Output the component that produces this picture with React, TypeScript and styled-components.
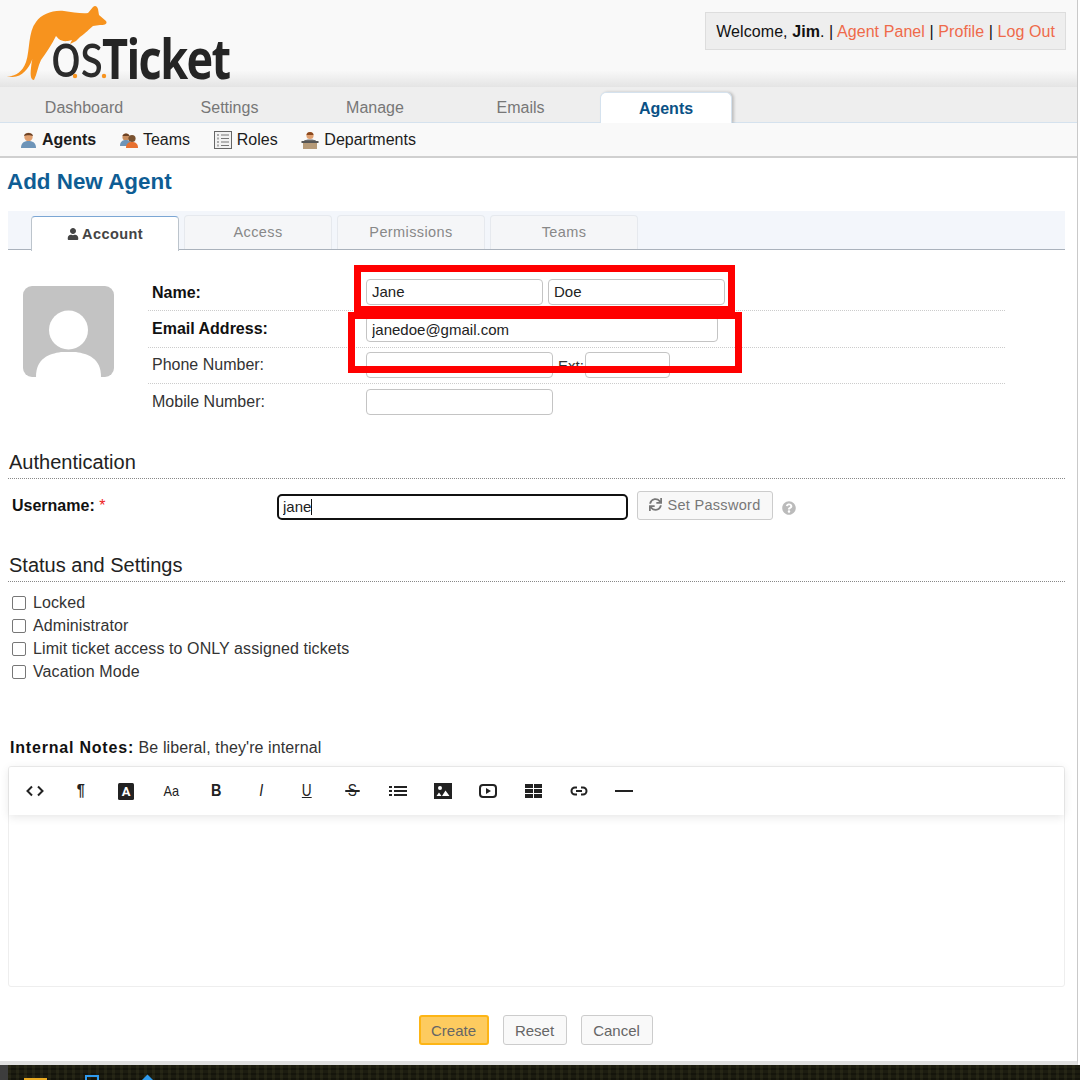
import React from "react";
import styled, { createGlobalStyle } from "styled-components";
import { FaUser, FaSync, FaQuestionCircle } from "react-icons/fa";

const Global = createGlobalStyle`
  html, body { margin: 0; padding: 0; background: #fff; }
  * { box-sizing: border-box; }
  body { font-family: "Liberation Sans", Arial, sans-serif; font-size: 16px; color: #111; }
`;

const Page = styled.div`
  position: relative;
  width: 1080px;
  height: 1080px;
  overflow: hidden;
  display: flex;
  flex-direction: column;
  background: #fff;
`;
const Window = styled.div`
  width: 1078px;
  height: 1065px;
  flex: none;
  border-right: 1px solid #c9c9c9;
  border-bottom: 4px solid #e0e0e0;
  display: flex;
  flex-direction: column;
`;
const Header = styled.header`
  height: 87px;
  flex: none;
  background: linear-gradient(#f9f9f9 0, #f9f9f9 70px, #e4e4e4 87px);
  display: flex;
  justify-content: space-between;
  padding: 0 11px 0 7px;
`;
const Logo = styled.div`
  position: relative;
  width: 230px;
  height: 87px;
`;
const LogoOs = styled.span`
  position: absolute;
  left: 44px;
  top: 16px;
  font: 400 66px/72px Lato, sans-serif;
  letter-spacing: -1px;
  color: #2b2b2b;
  transform: scaleX(0.8);
  transform-origin: left center;
`;
const LogoTicket = styled.span`
  position: absolute;
  left: 95px;
  top: 26px;
  font: 700 55px/64px "Open Sans", sans-serif;
  letter-spacing: -2px;
  color: #252525;
  transform: scaleX(0.82);
  transform-origin: left center;
`;
const Welcome = styled.div`
  margin-top: 12px;
  height: 38px;
  padding: 1px 10px 0;
  background: #eee;
  border: 1px solid #ddd;
  display: flex;
  align-items: center;
  letter-spacing: 0.08px;
  white-space: pre;
`;
const Link = styled.a`
  color: #ef6a4a;
`;
const Nav = styled.nav`
  height: 36px;
  flex: none;
  background: #eee;
  border-bottom: 1px solid #d5e2ee;
  padding-left: 18px;
  display: flex;
  gap: 13.5px;
`;
const NavTab = styled.div<{ $active?: boolean }>`
  width: 132px;
  height: ${(p) => (p.$active ? "31px" : "auto")};
  margin-top: ${(p) => (p.$active ? "5px" : "0")};
  display: flex;
  align-items: center;
  justify-content: center;
  padding-top: ${(p) => (p.$active ? "2px" : "6px")};
  color: ${(p) => (p.$active ? "#0a5185" : "#777")};
  font-weight: ${(p) => (p.$active ? 700 : 400)};
  background: ${(p) => (p.$active ? "#fff" : "transparent")};
  border-radius: ${(p) => (p.$active ? "6px 6px 0 0" : "0")};
  border: ${(p) => (p.$active ? "1px solid #d5e2ee" : "none")};
  border-bottom: none;
  box-shadow: ${(p) => (p.$active ? "2px 0 3px rgba(0,0,0,.2)" : "none")};
`;
const SubNav = styled.div`
  height: 35px;
  flex: none;
  background: #f9f9f9;
  border-bottom: 2px solid #d0d0d0;
  padding-left: 20px;
  display: flex;
  align-items: center;
  gap: 23.7px;
`;
const SubItem = styled.div<{ $active?: boolean }>`
  display: flex;
  align-items: center;
  gap: 5px;
  font-weight: ${(p) => (p.$active ? 700 : 400)};
  color: #1c1c1c;
`;
const Main = styled.main`
  flex: 1;
  padding: 0 12px 0 8px;
  display: flex;
  flex-direction: column;
`;
const Title = styled.h2`
  margin: 10px 0 15px -1px;
  height: 28px;
  font: 700 22.4px/28px "Liberation Sans", sans-serif;
  color: #0e5d94;
`;
const TabBar = styled.div`
  height: 39px;
  background: #f3f6fb;
  border-bottom: 1px solid #aab2bc;
  padding: 4px 0 0 23px;
  display: flex;
  gap: 5px;
`;
const Tab = styled.div<{ $active?: boolean }>`
  width: 148px;
  height: ${(p) => (p.$active ? "35px" : "34px")};
  margin-top: ${(p) => (p.$active ? "1px" : "0")};
  background: ${(p) => (p.$active ? "#fff" : "#f5f6f8")};
  border: 1px solid ${(p) => (p.$active ? "#bcc4cc" : "#e6e9ee")};
  border-top-color: ${(p) => (p.$active ? "#7ba6d4" : "#e6e9ee")};
  border-bottom: none;
  border-radius: 4px 4px 0 0;
  display: flex;
  align-items: center;
  justify-content: center;
  gap: 3px;
  font-size: 14.5px;
  letter-spacing: 0.4px;
  font-weight: ${(p) => (p.$active ? 700 : 400)};
  color: ${(p) => (p.$active ? "#444" : "#888")};
  padding-bottom: ${(p) => (p.$active ? "0" : "1px")};
`;
const Profile = styled.section`
  display: flex;
  padding: 25px 60px 0 15px;
  height: 202px;
`;
const Avatar = styled.div`
  width: 91px;
  height: 91px;
  margin-top: 11px;
  flex: none;
`;
const Rows = styled.div`
  flex: 1;
  margin-left: 34px;
`;
const Row = styled.div<{ $last?: boolean }>`
  height: 36.4px;
  display: flex;
  align-items: center;
  border-bottom: ${(p) => (p.$last ? "none" : "1px dotted #ccc")};
`;
const RowLabel = styled.div<{ $bold?: boolean }>`
  width: 218px;
  padding-left: 4px;
  font-weight: ${(p) => (p.$bold ? 700 : 400)};
  color: ${(p) => (p.$bold ? "#111" : "#333")};
`;
const TextBox = styled.input<{ $w: number; $up?: boolean }>`
  width: ${(p) => p.$w}px;
  height: 26px;
  margin-top: ${(p) => (p.$up ? "-2px" : "0")};
  padding: 0 5px;
  border: 1px solid #c4c4c4;
  border-radius: 4px;
  background: #fff;
  font: 15px "Liberation Sans", sans-serif;
  color: #222;
  outline: none;
`;
const Ext = styled.span`
  margin: 0 1px 0 5px;
  color: #333;
  font-size: 15px;
`;
const Gap = styled.span`
  display: inline-block;
  width: 5px;
`;
const Section = styled.div`
  height: 27px;
  padding-left: 1px;
  border-bottom: 1px dotted #888;
  font-size: 20px;
  line-height: 21px;
  color: #222;
`;
const UserRow = styled.div`
  display: flex;
  align-items: center;
  height: 42px;
  margin: 6px 0 28px;
  padding-left: 4px;
`;
const UserLabel = styled.div`
  width: 265px;
  font-weight: 700;
`;
const Star = styled.span`
  color: #e22;
  font-weight: 400;
`;
const FocusBox = styled.input`
  width: 351px;
  height: 26px;
  padding: 0 4px;
  margin-top: 1px;
  border: 2px solid #111;
  border-radius: 5px;
  font: 15px "Liberation Sans", sans-serif;
  color: #222;
  outline: none;
`;
const Caret = styled.span`
  position: absolute;
  left: 311px;
  top: 499px;
  width: 1px;
  height: 16px;
  background: #111;
`;
const SetPw = styled.div`
  width: 136px;
  height: 29px;
  margin: -1px 0 0 9px;
  padding-bottom: 2px;
  border: 1px solid #ccc;
  border-radius: 3px;
  background: #f8f8f8;
  display: flex;
  align-items: center;
  justify-content: center;
  gap: 5px;
  color: #777;
  font-size: 14.5px;
  letter-spacing: 0.3px;
`;
const Help = styled.span`
  display: flex;
  margin: 3px 0 0 9px;
  color: #bbb;
  font-size: 14px;
`;
const Checks = styled.div`
  display: flex;
  flex-direction: column;
  padding: 10px 0 0 4px;
  height: 156px;
`;
const CheckRow = styled.label`
  height: 22.8px;
  display: flex;
  align-items: center;
  gap: 7px;
  letter-spacing: 0.09px;
  color: #333;
`;
const Box = styled.span`
  width: 14px;
  height: 14px;
  flex: none;
  border: 1px solid #777;
  border-radius: 2px;
  background: #fff;
`;
const Notes = styled.div`
  height: 28px;
  padding-left: 2px;
  line-height: 20px;
  color: #333;
  letter-spacing: 0.1px;
  b {
    color: #111;
    letter-spacing: 0.8px;
  }
`;
const Editor = styled.div`
  height: 221px;
  border: 1px solid #eee;
  border-radius: 3px;
`;
const Toolbar = styled.div`
  height: 48px;
  padding-left: 3.5px;
  display: flex;
  align-items: center;
  box-shadow: 0 2px 9px rgba(0, 0, 0, 0.1);
  color: #222;
`;
const Tool = styled.span`
  width: 45.3px;
  flex: none;
  display: flex;
  align-items: center;
  justify-content: center;
`;
const Glyph = styled.span<{ $size?: number; $bold?: boolean; $italic?: boolean; $under?: boolean }>`
  font: ${(p) => (p.$italic ? "italic " : "")}${(p) => (p.$bold ? 700 : 400)} ${(p) => p.$size ?? 15}px/18px "Liberation Sans", sans-serif;
  text-decoration: ${(p) => (p.$under ? "underline" : "none")};
  display: inline-block;
  transform: scaleX(0.85);
`;
const StrikeGlyph = styled(Glyph)`
  position: relative;
  &::after {
    content: "";
    position: absolute;
    left: -3px;
    right: -3px;
    top: 8px;
    height: 1.5px;
    background: #222;
  }
`;
const Actions = styled.div`
  display: flex;
  justify-content: center;
  gap: 14px;
  margin-top: 28px;
  padding-right: 2px;
`;
const Btn = styled.div<{ $primary?: boolean; $w: number }>`
  width: ${(p) => p.$w}px;
  height: 30px;
  border: ${(p) => (p.$primary ? "2px solid #fdb515" : "1px solid #ccc")};
  border-radius: 3px;
  background: ${(p) => (p.$primary ? "#fdcb5f" : "#f9f9f9")};
  display: flex;
  align-items: center;
  justify-content: center;
  font-size: 15px;
  color: #666;
`;
const Taskbar = styled.div`
  flex: 1;
  border-left: 8px solid #3d3d3d;
  background-color: #1c1c10;
  background-image: repeating-linear-gradient(90deg, rgba(90, 90, 50, 0.16) 0 3px, transparent 3px 8px),
    repeating-linear-gradient(0deg, rgba(0, 0, 0, 0.3) 0 2px, transparent 2px 5px);
  display: flex;
  align-items: flex-start;
  padding-left: 16px;
  overflow: hidden;
`;
const TrayFolder = styled.span`
  width: 23px;
  height: 4px;
  margin-top: 13px;
  background: #e8a920;
`;
const TrayStore = styled.span`
  width: 14px;
  height: 8px;
  margin: 10px 0 0 38px;
  border: 2px solid #2f9bef;
  border-bottom: none;
`;
const TrayEdge = styled.span`
  width: 17px;
  height: 17px;
  margin: 10px 0 0 40px;
  background: #2f9bef;
  transform: rotate(45deg) scale(0.75);
`;
const RedBox = styled.div<{ $l: number; $t: number; $w: number; $h: number }>`
  position: absolute;
  left: ${(p) => p.$l}px;
  top: ${(p) => p.$t}px;
  width: ${(p) => p.$w}px;
  height: ${(p) => p.$h}px;
  border: 7px solid #ff0000;
`;

const Roo = () => (
  <svg width="112" height="84" viewBox="0 0 112 84" style={{ position: "absolute", left: -7, top: 0 }}>
    <path
      fill="#f7931e"
      d="M7 76 C14 77 22 73 26 62 C30 50 28 32 36 22 C42 14 52 10 64 11 C72 12 82 14 88 13 L93 7 C95 5 97 6 98 9 L99 15 L106 21 C108 24 104 25.500 100 25 L93 26 C89 29 86 33 80 37 L76 41 L70 44 L72 40 L68 41 C60 42 58 38 56 36 C52 44 46 53 41 60 C38 66 37 74 34 80 C31 80 30 76 31 68 C32 55 38 40 45 29 C39 38 36 50 32 60 C28 70 20 80 7 76 Z"
    />
    <circle cx="75" cy="76" r="2.200" fill="#f7931e" />
    <circle cx="104" cy="76" r="2.200" fill="#f7931e" />
  </svg>
);

const Person = ({ shirt = "#6d94b8" }: { shirt?: string }) => (
  <svg width="17" height="18" viewBox="0 0 17 18">
    <circle cx="8.500" cy="6" r="4.200" fill="#e0a070" />
    <path d="M4 5 C4 1 13 1 13 5 C11 4 6 4 4 5Z" fill="#6b4226" />
    <path d="M1 17 C1 11 5 10 8.500 10 C12 10 16 11 16 17 Z" fill={shirt} />
  </svg>
);
const Team = () => (
  <svg width="18" height="18" viewBox="0 0 18 18">
    <circle cx="6" cy="6" r="3.600" fill="#c98d5e" />
    <path d="M2.500 5 C3 1.500 9 1.500 9.500 5Z" fill="#6b4226" />
    <path d="M0 15 C0 10 3 9 6 9 C9 9 11 10 11 15Z" fill="#6d94b8" />
    <circle cx="12" cy="7.500" r="3.600" fill="#7a5230" />
    <path d="M6 17 C6 12 9 11 12 11 C15 11 18 12 18 17Z" fill="#e8702f" />
  </svg>
);
const RoleIcon = () => (
  <svg width="18" height="18" viewBox="0 0 18 18">
    <rect x="0.500" y="0.500" width="17" height="17" fill="#f2f2f2" stroke="#666" />
    {[4, 7.5, 11, 14.5].map((y) => (
      <g key={y}>
        <rect x="3" y={y - 1} width="2" height="2" fill="#aaa" />
        <rect x="7" y={y - 0.5} width="8" height="1" fill="#777" />
      </g>
    ))}
  </svg>
);
const DeptIcon = () => (
  <svg width="18" height="18" viewBox="0 0 18 18">
    <circle cx="9" cy="4.500" r="3.600" fill="#e0a070" />
    <path d="M5.500 4 C5.500 0 12.500 0 12.500 4Z" fill="#8a4a20" />
    <path d="M3 10 C3 8 15 8 15 10Z" fill="#6a6a6a" />
    <rect x="0.500" y="10" width="17" height="2" fill="#555" />
    <rect x="2" y="12" width="14" height="6" fill="#b59a78" />
  </svg>
);

const Silhouette = () => (
  <svg width="91" height="91" viewBox="0 0 91 91">
    <rect width="91" height="91" rx="9" fill="#c3c3c3" />
    <circle cx="45.500" cy="44" r="19.500" fill="#fff" />
    <path d="M13 91 C13 72 26 68 38 66 L53 66 C65 68 78 72 78 91 Z" fill="#fff" />
  </svg>
);

const Svg = ({ w = 18, h = 16, children }: { w?: number; h?: number; children: React.ReactNode }) => (
  <svg width={w} height={h} viewBox={`0 0 ${w} ${h}`}>
    {children}
  </svg>
);

export default function App() {
  return (
    <Page>
      <Global />
      <Window>
        <Header>
          <Logo>
            <LogoOs>os</LogoOs>
            <LogoTicket>Ticket</LogoTicket>
            <Roo />
          </Logo>
          <Welcome>
            <span>
              Welcome, <b>Jim</b>. | <Link>Agent Panel</Link> | <Link>Profile</Link> | <Link>Log Out</Link>
            </span>
          </Welcome>
        </Header>
        <Nav>
          <NavTab>Dashboard</NavTab>
          <NavTab>Settings</NavTab>
          <NavTab>Manage</NavTab>
          <NavTab>Emails</NavTab>
          <NavTab $active>Agents</NavTab>
        </Nav>
        <SubNav>
          <SubItem $active>
            <Person />
            Agents
          </SubItem>
          <SubItem>
            <Team />
            Teams
          </SubItem>
          <SubItem>
            <RoleIcon />
            Roles
          </SubItem>
          <SubItem>
            <DeptIcon />
            Departments
          </SubItem>
        </SubNav>
        <Main>
          <Title>Add New Agent</Title>
          <TabBar>
            <Tab $active>
              <FaUser size={12} />
              Account
            </Tab>
            <Tab>Access</Tab>
            <Tab>Permissions</Tab>
            <Tab>Teams</Tab>
          </TabBar>
          <Profile>
            <Avatar>
              <Silhouette />
            </Avatar>
            <Rows>
              <Row>
                <RowLabel $bold>Name:</RowLabel>
                <TextBox $w={177} $up defaultValue="Jane" />
                <Gap />
                <TextBox $w={177} $up defaultValue="Doe" />
              </Row>
              <Row>
                <RowLabel $bold>Email Address:</RowLabel>
                <TextBox $w={352} defaultValue="janedoe@gmail.com" />
              </Row>
              <Row>
                <RowLabel>Phone Number:</RowLabel>
                <TextBox $w={187} />
                <Ext>Ext:</Ext>
                <TextBox $w={85} />
              </Row>
              <Row $last>
                <RowLabel>Mobile Number:</RowLabel>
                <TextBox $w={187} />
              </Row>
            </Rows>
          </Profile>
          <Section>Authentication</Section>
          <UserRow>
            <UserLabel>
              Username: <Star>*</Star>
            </UserLabel>
            <FocusBox defaultValue="jane" />
            <SetPw>
              <FaSync size={13} />
              Set Password
            </SetPw>
            <Help>
              <FaQuestionCircle />
            </Help>
          </UserRow>
          <Section>Status and Settings</Section>
          <Checks>
            <CheckRow>
              <Box />
              Locked
            </CheckRow>
            <CheckRow>
              <Box />
              Administrator
            </CheckRow>
            <CheckRow>
              <Box />
              Limit ticket access to ONLY assigned tickets
            </CheckRow>
            <CheckRow>
              <Box />
              Vacation Mode
            </CheckRow>
          </Checks>
          <Notes>
            <b>Internal Notes:</b> Be liberal, they're internal
          </Notes>
          <Editor>
            <Toolbar>
              <Tool>
                <Svg w={18} h={12}>
                  <path d="M6 1.500 L1.500 6 L6 10.500 M12 1.500 L16.500 6 L12 10.500" fill="none" stroke="#222" strokeWidth="2" />
                </Svg>
              </Tool>
              <Tool>
                <Glyph $size={17} $bold>¶</Glyph>
              </Tool>
              <Tool>
                <Svg w={16} h={17}>
                  <rect width="16" height="17" rx="1.500" fill="#222" />
                  <text x="8" y="13" textAnchor="middle" fontFamily="Roboto" fontSize="13" fontWeight="700" fill="#fff">A</text>
                </Svg>
              </Tool>
              <Tool>
                <Glyph $size={15}>Aa</Glyph>
              </Tool>
              <Tool>
                <Glyph $size={17} $bold>B</Glyph>
              </Tool>
              <Tool>
                <Glyph $size={17} $italic>I</Glyph>
              </Tool>
              <Tool>
                <Glyph $size={16} $under>U</Glyph>
              </Tool>
              <Tool>
                <StrikeGlyph $size={16}>S</StrikeGlyph>
              </Tool>
              <Tool>
                <Svg w={18} h={12}>
                  <path d="M0 1h3v2H0zM5 1h13v2H5zM0 5h3v2H0zM5 5h13v2H5zM0 9h3v2H0zM5 9h13v2H5z" fill="#222" />
                </Svg>
              </Tool>
              <Tool>
                <Svg w={18} h={16}>
                  <rect width="18" height="16" fill="#222" />
                  <circle cx="6" cy="5" r="2" fill="#fff" />
                  <path d="M2.500 13 L5 9.500 L7.500 13 Z M8 13 L11.500 7.500 L15.500 13 Z" fill="#fff" />
                </Svg>
              </Tool>
              <Tool>
                <Svg w={18} h={14}>
                  <rect x="1" y="1" width="16" height="12" rx="3" fill="none" stroke="#222" strokeWidth="2" />
                  <path d="M7 4 L12 7 L7 10Z" fill="#222" />
                </Svg>
              </Tool>
              <Tool>
                <Svg w={17} h={14}>
                  <path d="M0 0h8v4H0zM9 0h8v4H9zM0 5h8v4H0zM9 5h8v4H9zM0 10h8v4H0zM9 10h8v4H9z" fill="#222" />
                </Svg>
              </Tool>
              <Tool>
                <Svg w={18} h={10}>
                  <path d="M7 1.500 H5 A3.500 3.500 0 0 0 5 8.500 H7 M11 1.500 H13 A3.500 3.500 0 0 1 13 8.500 H11 M6 5 H12" fill="none" stroke="#222" strokeWidth="2" />
                </Svg>
              </Tool>
              <Tool>
                <Svg w={18} h={4}>
                  <rect y="1" width="18" height="2" fill="#222" />
                </Svg>
              </Tool>
            </Toolbar>
          </Editor>
          <Actions>
            <Btn $primary $w={70}>Create</Btn>
            <Btn $w={64}>Reset</Btn>
            <Btn $w={72}>Cancel</Btn>
          </Actions>
        </Main>
      </Window>
      <Taskbar>
        <TrayFolder />
        <TrayStore />
        <TrayEdge />
      </Taskbar>
      <Caret />
      <RedBox $l={354} $t={265} $w={381} $h={48} />
      <RedBox $l={348} $t={312} $w={394} $h={61} />
    </Page>
  );
}
